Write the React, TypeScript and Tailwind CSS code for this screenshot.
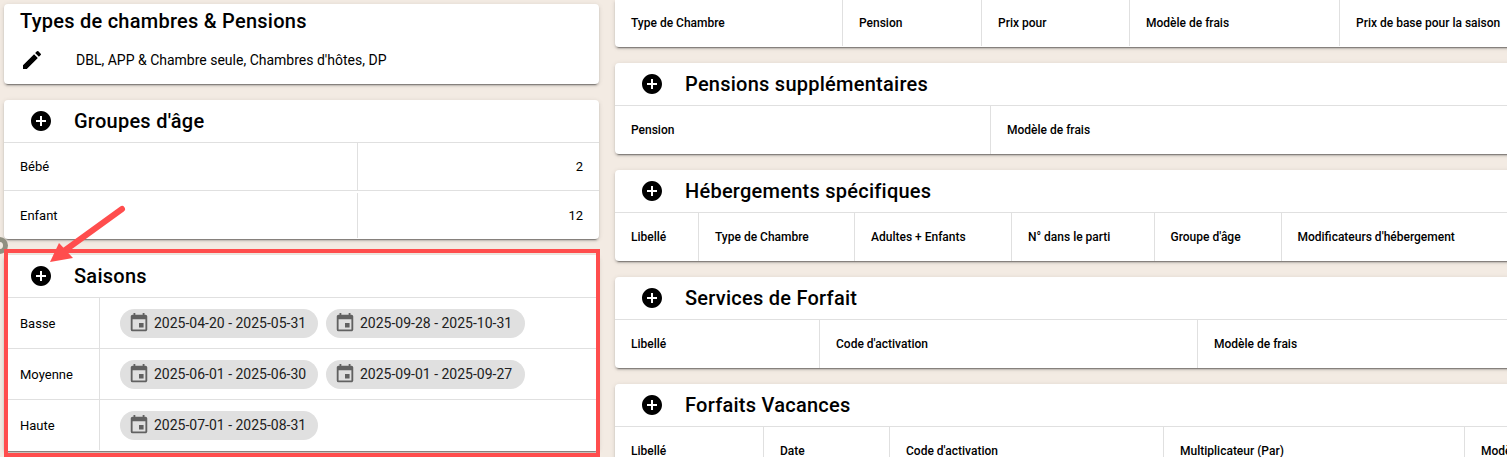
import { MdAddCircle, MdEdit, MdEvent } from 'react-icons/md'

const cardClass =
  'bg-white rounded shadow-[0_3px_1px_-2px_rgba(0,0,0,0.35),0_2px_2px_0_rgba(0,0,0,0.14),0_1px_5px_0_rgba(0,0,0,0.12)] overflow-hidden'

function CardHeader({ title }: { title: string }) {
  return (
    <div className="flex items-center h-[43px] pl-[25px] gap-[21px] border-b border-[#e0e0e0]">
      <MdAddCircle size={24} className="text-black shrink-0" />
      <h2 className="text-[20px] leading-6 font-medium tracking-[0.25px] text-black">{title}</h2>
    </div>
  )
}

function HeadRow({ cols, className = 'h-[48px]' }: { cols: [string, number][]; className?: string }) {
  return (
    <div className={`flex ${className}`}>
      {cols.map(([label, width], i) => (
        <div
          key={label}
          style={{ width }}
          className={`shrink-0 flex items-center px-4 text-xs font-medium text-black whitespace-nowrap ${
            i < cols.length - 1 ? 'border-r border-[#e0e0e0]' : ''
          }`}
        >
          {label}
        </div>
      ))}
    </div>
  )
}

function TableCard({ title, cols }: { title: string; cols: [string, number][] }) {
  return (
    <section className={cardClass}>
      <CardHeader title={title} />
      <HeadRow cols={cols} />
    </section>
  )
}

function DateChip({ label, wide }: { label: string; wide?: boolean }) {
  return (
    <span
      className={`inline-flex items-center h-[29px] rounded-full bg-[#e0e0e0] pl-[8px] gap-[4px] text-sm text-[#212121] whitespace-nowrap ${
        wide ? 'w-[199px]' : 'w-[198px]'
      }`}
    >
      <MdEvent size={22} className="text-[#616161] shrink-0" />
      {label}
    </span>
  )
}

const seasons = [
  { name: 'Basse', dates: ['2025-04-20 - 2025-05-31', '2025-09-28 - 2025-10-31'] },
  { name: 'Moyenne', dates: ['2025-06-01 - 2025-06-30', '2025-09-01 - 2025-09-27'] },
  { name: 'Haute', dates: ['2025-07-01 - 2025-08-31'] },
]

export default function App() {
  return (
    <div className="relative w-[1507px] h-[457px] overflow-hidden bg-[#f3ebe3] font-['Roboto',sans-serif] text-black">
      <div className="flex gap-4 pl-1">
        <div className="w-[595px] shrink-0 flex flex-col gap-4 pt-1">
          <section className={`${cardClass} h-[80px]`}>
            <h2 className="pl-4 pt-[5px] text-[20px] leading-6 font-medium tracking-[0.25px]">
              Types de chambres &amp; Pensions
            </h2>
            <div className="flex items-center mt-[15px] pl-[16px] gap-[32px] text-sm">
              <MdEdit size={24} className="shrink-0" />
              <span>DBL, APP &amp; Chambre seule, Chambres d'hôtes, DP</span>
            </div>
          </section>

          <section className={cardClass}>
            <CardHeader title="Groupes d'âge" />
            {[
              ['Bébé', '2'],
              ['Enfant', '12'],
            ].map(([name, age], i) => (
              <div
                key={name}
                className={`flex h-[48px] text-[13px] border-b ${
                  i === 0 ? 'border-[#e0e0e0]' : 'border-transparent pt-[2px]'
                }`}
              >
                <div className="w-[354px] flex items-center pl-4 border-r border-[#e0e0e0]">{name}</div>
                <div className="flex-1 flex items-center justify-end pr-4">{age}</div>
              </div>
            ))}
          </section>

          <section className={cardClass}>
            <CardHeader title="Saisons" />
            {seasons.map((season, i) => (
              <div
                key={season.name}
                className={`flex h-[51px] border-b ${i < 2 ? 'border-[#e0e0e0]' : 'border-transparent'}`}
              >
                <div className="w-[96px] flex items-center pl-4 pt-[2px] text-[13px] border-r border-[#e0e0e0]">
                  {season.name}
                </div>
                <div className="flex items-center gap-2 pl-5">
                  {season.dates.map((d, j) => (
                    <DateChip key={d} label={d} wide={j === 1} />
                  ))}
                </div>
              </div>
            ))}
          </section>
        </div>

        <div className="w-[900px] shrink-0 flex flex-col gap-4">
          <section className={`${cardClass} rounded-t-none`}>
            <HeadRow
              className="h-[47px] pb-px"
              cols={[
                ['Type de Chambre', 228],
                ['Pension', 139],
                ['Prix pour', 148],
                ['Modèle de frais', 210],
                ['Prix de base pour la saison', 175],
              ]}
            />
          </section>
          <TableCard
            title="Pensions supplémentaires"
            cols={[
              ['Pension', 376],
              ['Modèle de frais', 524],
            ]}
          />
          <TableCard
            title="Hébergements spécifiques"
            cols={[
              ['Libellé', 84],
              ['Type de Chambre', 156],
              ['Adultes + Enfants', 157],
              ['N° dans le parti', 142.5],
              ['Groupe d\'âge', 127],
              ['Modificateurs d\'hébergement', 233.5],
            ]}
          />
          <TableCard
            title="Services de Forfait"
            cols={[
              ['Libellé', 205],
              ['Code d\'activation', 378],
              ['Modèle de frais', 317],
            ]}
          />
          <TableCard
            title="Forfaits Vacances"
            cols={[
              ['Libellé', 149],
              ['Date', 126],
              ['Code d\'activation', 274],
              ['Multiplicateur (Par)', 301],
              ['Modèle de frais', 150],
            ]}
          />
        </div>
      </div>

      {/* annotation drawn over the screenshot */}
      <div className="absolute left-[-9px] top-[237px] w-[17px] h-[17px] rounded-full border-[5px] border-[#8f8f80]" />
      <div className="absolute left-[4px] top-[249px] w-[596px] h-[208px] border-[4px] border-[#ff4d4d]" />
      <svg className="absolute left-0 top-0 pointer-events-none" width="200" height="300" viewBox="0 0 200 300">
        <line x1="122" y1="209" x2="64" y2="251" stroke="#ff4d4d" strokeWidth="6" strokeLinecap="round" />
        <polygon points="50,262 59,243 73,258" fill="#ff4d4d" />
      </svg>
    </div>
  )
}
